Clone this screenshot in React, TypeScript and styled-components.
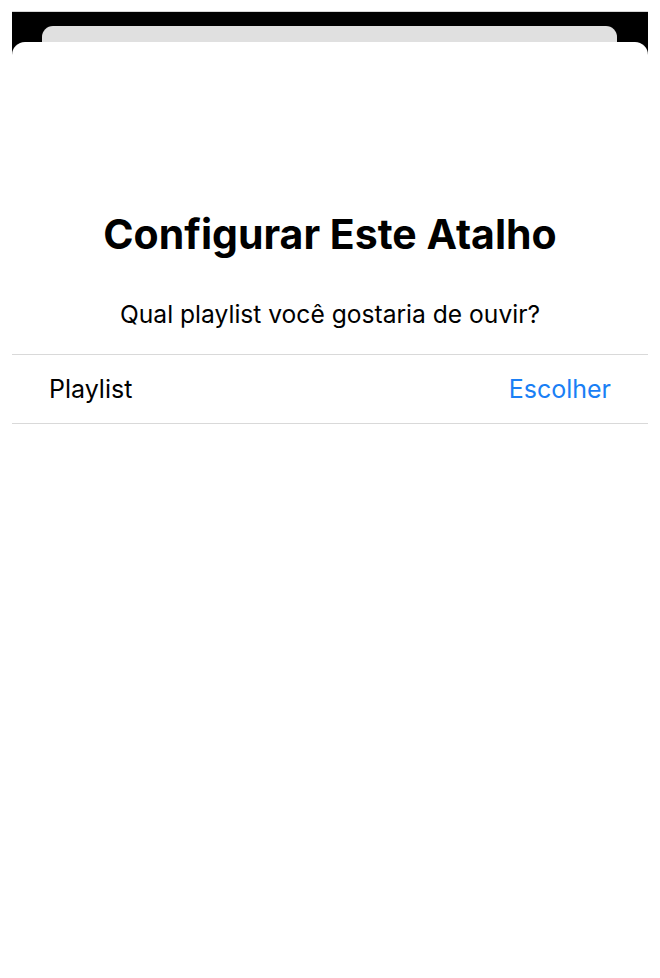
import React from 'react';
import styled, { createGlobalStyle } from 'styled-components';

const GlobalStyle = createGlobalStyle`
  html, body {
    margin: 0;
    padding: 0;
    background: #ffffff;
  }
  body {
    font-family: Inter, "Noto Sans", "Liberation Sans", sans-serif;
    -webkit-font-smoothing: antialiased;
  }
`;

const Frame = styled.div`
  box-sizing: border-box;
  margin: 11px 12px 0;
  border-top: 1px solid #d6d6d6;
  background: linear-gradient(#000 0, #000 46px, #fff 62px);
  height: 967px;
  overflow: hidden;
`;

const BackCard = styled.div`
  margin: 14px 31px 0 30px;
  height: 16px;
  background: #e0e0e0;
  border-radius: 11px 11px 0 0;
`;

const Sheet = styled.div`
  background: #ffffff;
  border-radius: 13px 13px 0 0;
  min-height: 920px;
  padding-top: 168px;
`;

const Title = styled.h1`
  margin: 0;
  font-size: 41px;
  line-height: 48px;
  font-weight: 700;
  letter-spacing: 0;
  color: #000;
  text-align: center;
`;

const Subtitle = styled.p`
  margin: 42px 0 0;
  font-size: 24.6px;
  line-height: 28px;
  font-weight: 400;
  color: #000;
  text-align: center;
`;

const List = styled.div`
  margin-top: 26px;
  border-top: 1px solid #d9d9d9;
  border-bottom: 1px solid #d9d9d9;
`;

const Row = styled.div`
  display: flex;
  align-items: center;
  justify-content: space-between;
  height: 68px;
  padding: 0 37px;
`;

const Label = styled.span`
  font-size: 25px;
  color: #000;
`;

const Action = styled.button<{ $tint?: string }>`
  border: none;
  background: none;
  padding: 0;
  font: inherit;
  font-size: 25px;
  color: ${p => p.$tint || '#1a7ff5'};
  cursor: pointer;
`;

const App: React.FC = () => {
  return (
    <>
      <GlobalStyle />
      <Frame>
        <BackCard />
        <Sheet>
          <Title>Configurar Este Atalho</Title>
          <Subtitle>Qual playlist você gostaria de ouvir?</Subtitle>
          <List>
            <Row>
              <Label>Playlist</Label>
              <Action>Escolher</Action>
            </Row>
          </List>
        </Sheet>
      </Frame>
    </>
  );
};

export default App;
